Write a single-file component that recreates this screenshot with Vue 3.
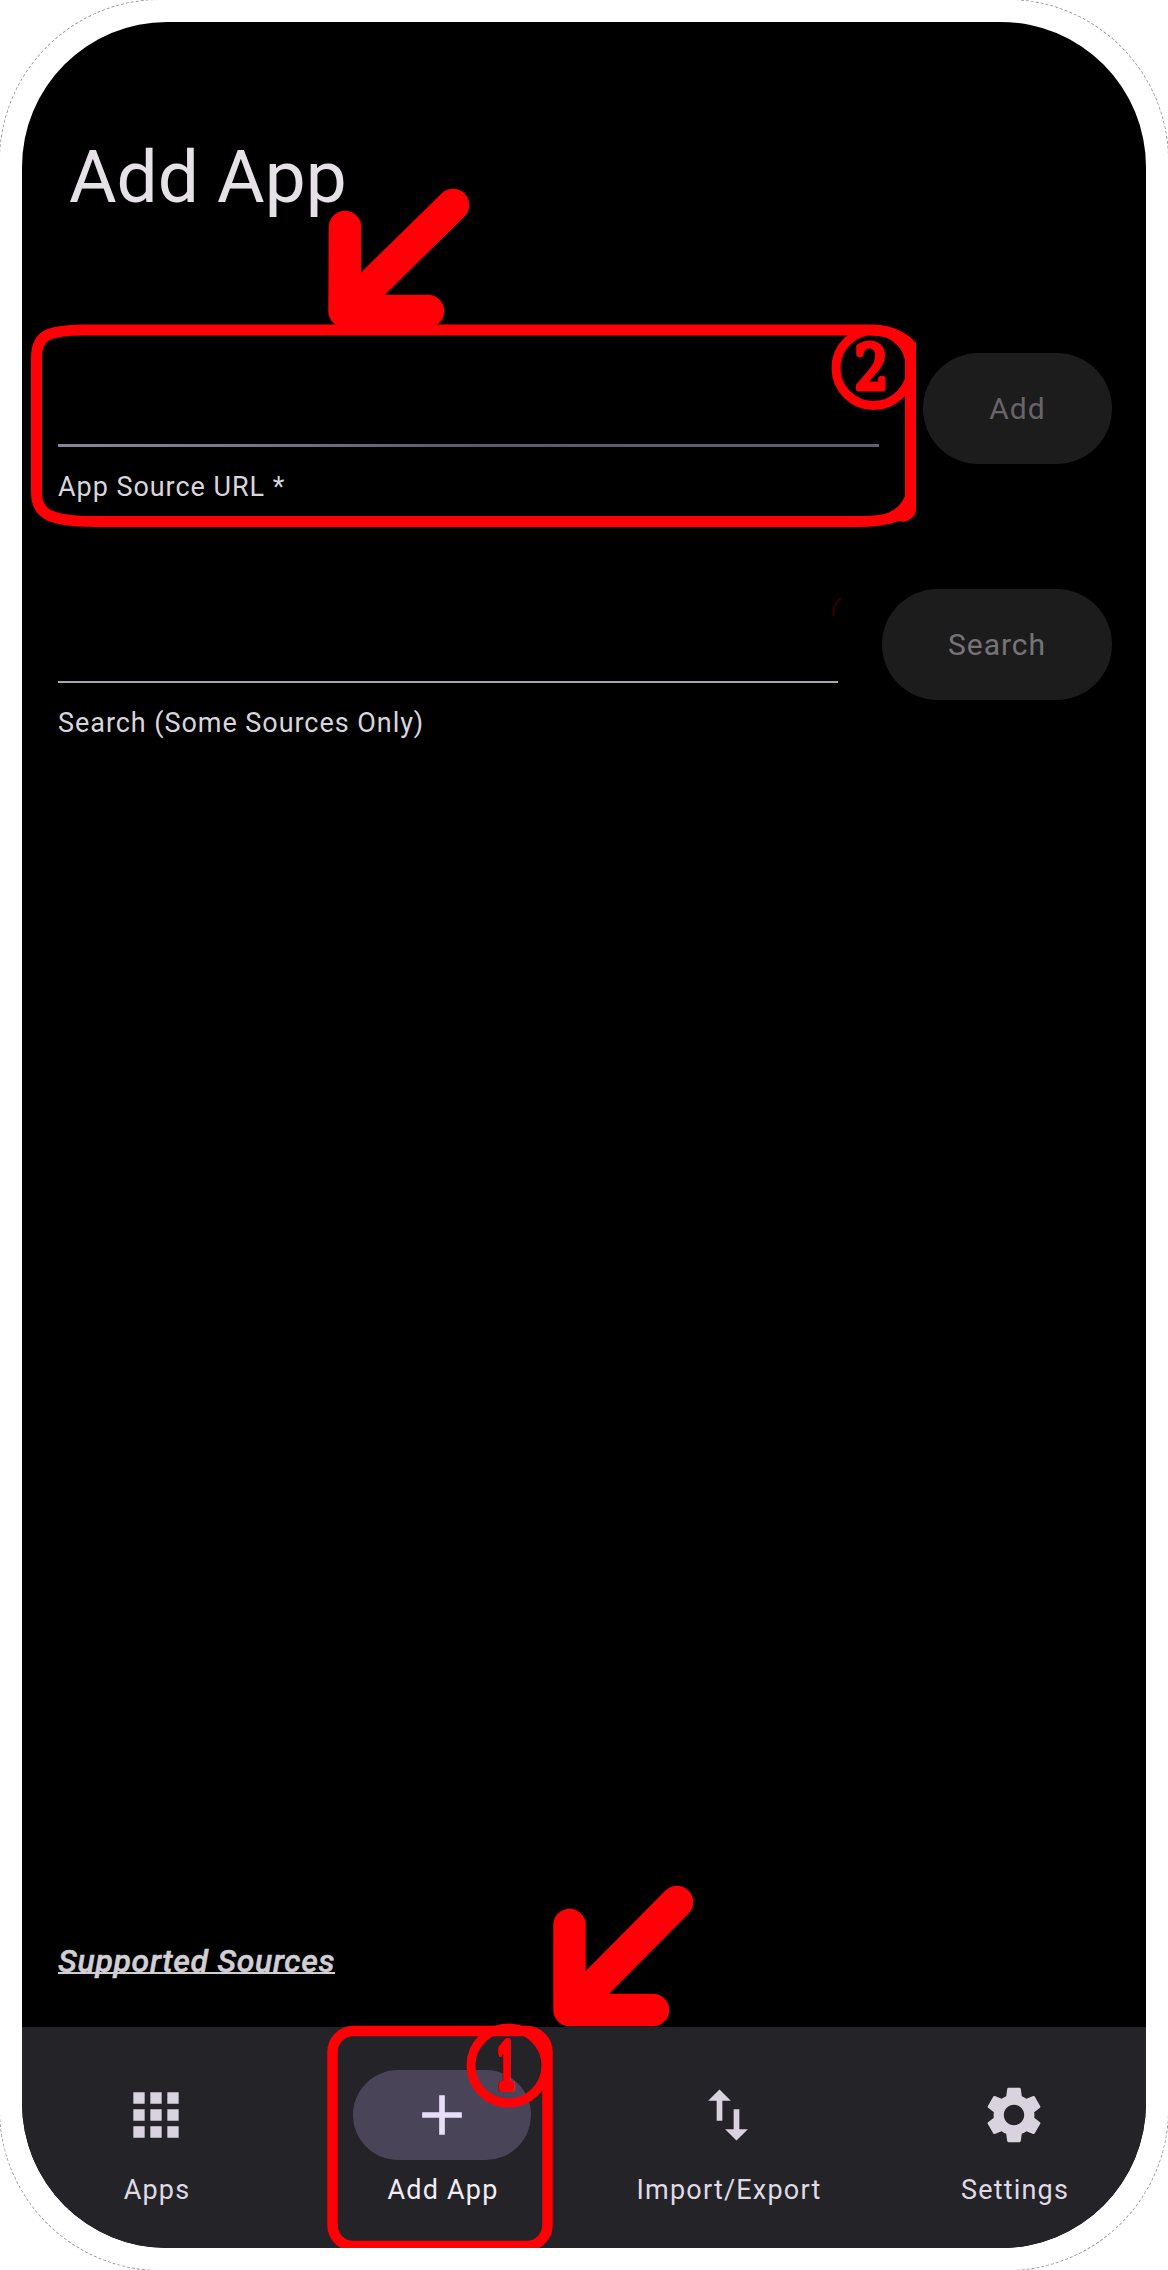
<script setup>
const fields = [
  { label: 'App Source URL *', action: 'Add', kind: 'add' },
  { label: 'Search (Some Sources Only)', action: 'Search', kind: 'search' },
]

const tabs = [
  { label: 'Apps', icon: 'M4 8h4V4H4v4zm6 12h4v-4h-4v4zm-6 0h4v-4H4v4zm0-6h4v-4H4v4zm6 0h4v-4h-4v4zm6-10v4h4V4h-4zm-6 4h4V4h-4v4zm6 6h4v-4h-4v4zm0 6h4v-4h-4v4z' },
  { label: 'Add App', active: true, icon: 'M19 13h-6v6h-2v-6H5v-2h6V5h2v6h6v2z' },
  { label: 'Import/Export', icon: 'M9 3L5 6.99h3V14h2V6.99h3L9 3zm7 14.01V10h-2v7.01h-3L15 21l4-3.99h-3z' },
  { label: 'Settings', icon: 'M19.14 12.94c.04-.3.06-.61.06-.94 0-.32-.02-.64-.07-.94l2.03-1.58c.18-.14.23-.41.12-.61l-1.92-3.32c-.12-.22-.37-.29-.59-.22l-2.39.96c-.5-.38-1.03-.7-1.62-.94l-.36-2.54c-.04-.24-.24-.41-.48-.41h-3.84c-.24 0-.43.17-.47.41l-.36 2.54c-.59.24-1.13.57-1.62.94l-2.39-.96c-.22-.08-.47 0-.59.22L2.74 8.87c-.12.21-.08.47.12.61l2.03 1.58c-.05.3-.09.63-.09.94s.02.64.07.94l-2.03 1.58c-.18.14-.23.41-.12.61l1.92 3.32c.12.22.37.29.59.22l2.39-.96c.5.38 1.03.7 1.62.94l.36 2.54c.05.24.24.41.48.41h3.84c.24 0 .44-.17.47-.41l.36-2.54c.59-.24 1.13-.56 1.62-.94l2.39.96c.22.08.47 0 .59-.22l1.92-3.32c.12-.22.07-.47-.12-.61l-2.01-1.58zM12 15.6c-1.98 0-3.6-1.62-3.6-3.6s1.62-3.6 3.6-3.6 3.6 1.62 3.6 3.6-1.62 3.6-3.6 3.6z' },
]
</script>

<template>
  <div class="device">
    <div class="screen">
      <main class="content">
        <h1 class="title">Add App</h1>
        <div v-for="f in fields" :key="f.kind" class="row" :class="f.kind">
          <label class="field">
            <span class="line"></span>
            <span class="caption">{{ f.label }}</span>
          </label>
          <button class="action" disabled>{{ f.action }}</button>
        </div>
        <a class="sources">Supported Sources</a>
      </main>
      <nav class="tabs">
        <div v-for="t in tabs" :key="t.label" class="tab" :class="{ active: t.active }">
          <span class="pill">
            <svg viewBox="0 0 24 24"><path :d="t.icon" /></svg>
          </span>
          <span class="tab-label">{{ t.label }}</span>
        </div>
      </nav>
    </div>

    <svg class="marks" viewBox="0 0 1168 2270">
      <defs>
        <clipPath id="screen-area"><rect x="22" y="22" width="1124" height="2226" /></clipPath>
      </defs>
      <g clip-path="url(#screen-area)">
        <!-- guide 2: source URL field -->
        <path class="frame" d="M85 330H868C896 330 910.500 340 910.500 360V498C910.500 514 892 521.500 858 521.500H95C50 521.500 36.500 514 36.500 493V358C36.500 336 46 330 85 330Z" />
        <path class="solid" d="M872 324.500Q902 326 916 343V380L905 360Q900 340 880 330ZM880 516Q905 508 906 490L916 490V510Q916 518 904 522Z" />
        <path class="arrow" d="M345 227L344.500 311H428M345 311L453 205" />
        <circle class="ring" cx="873.500" cy="368" r="37.500" />
        <text class="digit" transform="translate(871.500 389) scale(.88 1)">2</text>
        <path class="trace" d="M833.500 616Q832 606 841 598" />
        <!-- guide 1: add tab -->
        <rect class="frame tab-frame" x="332.500" y="2031" width="215" height="215" rx="21" />
        <path class="arrow" d="M569.500 1925V2010H653M570 2010L677 1902" />
        <circle class="ring" cx="508.500" cy="2065.500" r="37.500" />
        <text class="digit one" transform="translate(506.500 2088) scale(.56 1)">1</text>
      </g>
    </svg>
  </div>
</template>

<style>
body {
  margin: 0;
  background: #fff;
}
</style>

<style scoped>
.device {
  position: relative;
  box-sizing: border-box;
  width: 1168px;
  height: 2270px;
  padding: 22px;
  overflow: hidden;
  background: #fff;
  font-family: Roboto, sans-serif;
}
.device::before {
  content: '';
  position: absolute;
  inset: -1px;
  border: 1px dashed #999;
  border-radius: 162px;
}
.screen {
  position: relative;
  display: flex;
  flex-direction: column;
  height: 2226px;
  border-radius: 145px;
  overflow: hidden;
  background: #000;
}
.content {
  flex: 1;
  display: flex;
  flex-direction: column;
  padding: 0 34px 0 36px;
}
.title {
  margin: 113px 0 0 11px;
  font-size: 73px;
  font-weight: 400;
  line-height: 84px;
  color: #e6e1e6;
}
.row {
  display: flex;
  align-items: flex-start;
}
.row.add {
  margin-top: 133px;
  gap: 44px;
}
.row.search {
  margin-top: 86px;
  gap: 44px;
}
.field {
  flex: 1;
  display: flex;
  flex-direction: column;
  padding-top: 92px;
}
.line {
  height: 3px;
  background: linear-gradient(90deg, #88869a, #777482 25%, #5d5966 50%, #625e6b);
}
.search .line {
  height: 2px;
  background: #aaa7b3;
}
.caption {
  margin-top: 24px;
  font-size: 27px;
  line-height: 32px;
  letter-spacing: .95px;
  white-space: nowrap;
  color: #d8d5dc;
}
.search .caption {
  margin-top: 24px;
}
.action {
  width: 189px;
  height: 111px;
  margin: 1px 0 0;
  padding: 0;
  border: 0;
  border-radius: 56px;
  background: #1c1c1d;
  color: #686468;
  font: 400 30px/112px Roboto, sans-serif;
  letter-spacing: 1px;
}
.search .action {
  width: 230px;
  margin-top: 0;
  color: #777477;
}
.sources {
  align-self: flex-start;
  margin-top: auto;
  margin-bottom: 47px;
  font-size: 32px;
  line-height: 38px;
  font-weight: 500;
  font-style: italic;
  letter-spacing: .66px;
  color: #d1ced4;
  -webkit-text-stroke: .5px #d1ced4;
  text-decoration: underline 2px;
  text-underline-offset: 0;
  text-decoration-skip-ink: none;
}
.tabs {
  display: flex;
  height: 221px;
  margin: 0 -11px 0 -9px;
  background: #242327;
}
.tab {
  flex: 1;
  display: flex;
  flex-direction: column;
  align-items: center;
  padding-top: 43px;
}
.pill {
  display: flex;
  align-items: center;
  justify-content: center;
  width: 178px;
  height: 90px;
  border-radius: 45px;
}
.active .pill {
  background: #4a4458;
}
.pill svg {
  width: 68px;
  height: 68px;
  fill: #d9d2df;
}
.active .pill svg {
  fill: #e8def8;
}
.tab-label {
  margin-top: 14px;
  padding-left: 2px;
  font-size: 27px;
  line-height: 32px;
  letter-spacing: 1.2px;
  color: #dfdae3;
}
.active .tab-label {
  color: #f2eef4;
}
.marks {
  position: absolute;
  inset: 0;
  width: 1168px;
  height: 2270px;
}
.frame,
.arrow,
.ring,
.trace {
  fill: none;
  stroke: #ff0006;
}
.frame {
  stroke-width: 11;
}
.tab-frame {
  stroke-width: 10.5px;
}
.arrow {
  stroke-width: 32.5;
  stroke-linecap: round;
  stroke-linejoin: round;
}
.ring {
  stroke-width: 9;
}
.trace {
  stroke: #300000;
  stroke-width: 2.5;
}
.solid {
  fill: #ff0006;
}
.digit {
  font: 400 61px "DejaVu Serif", serif;
  text-anchor: middle;
  fill: #ff0006;
  stroke: #ff0006;
  stroke-width: 5;
  stroke-linejoin: round;
}
.digit.one {
  stroke-width: 7.5;
}
</style>
